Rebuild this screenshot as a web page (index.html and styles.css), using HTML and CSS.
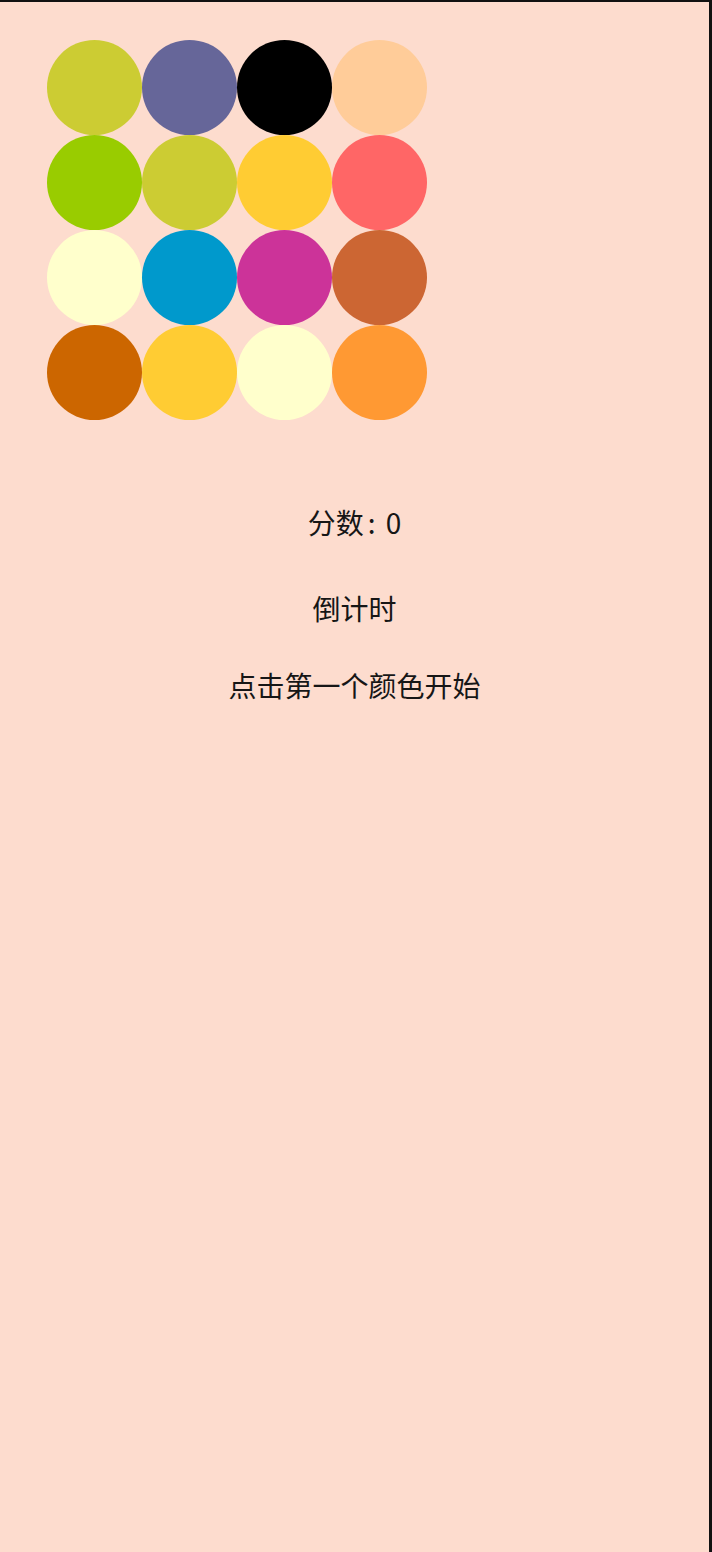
FILE: index.html
```html
<!DOCTYPE html>
<html lang="zh-CN">
<head>
<meta charset="utf-8">
<title>颜色游戏</title>
<link rel="stylesheet" href="styles.css">
</head>
<body>
<div class="page">
  <div class="board">
    <div class="dot c-cc3"></div>
    <div class="dot c-669"></div>
    <div class="dot c-000"></div>
    <div class="dot c-fc9"></div>
    <div class="dot c-9c0"></div>
    <div class="dot c-cc3"></div>
    <div class="dot c-fc3"></div>
    <div class="dot c-f66"></div>
    <div class="dot c-ffc"></div>
    <div class="dot c-09c"></div>
    <div class="dot c-c39"></div>
    <div class="dot c-c63"></div>
    <div class="dot c-c60"></div>
    <div class="dot c-fc3"></div>
    <div class="dot c-ffc"></div>
    <div class="dot c-f93"></div>
  </div>
  <p class="line score">分数<span class="sep">: </span>0</p>
  <p class="line timer">倒计时</p>
  <p class="line prompt">点击第一个颜色开始</p>
</div>
</body>
</html>
```
FILE: styles.css
```css
html, body {
  margin: 0;
  padding: 0;
  background: #fddcce;
}
.page {
  box-sizing: border-box;
  min-height: 1552px;
  width: 712px;
  background: #fddcce;
  border-top: 2px solid #111;
  border-right: 3px solid #111;
  font-family: "Noto Sans CJK SC", "Noto Sans", sans-serif;
  color: #161616;
  padding-top: 38px;
}
.board {
  display: grid;
  grid-template-columns: repeat(4, 95px);
  grid-auto-rows: 95px;
  margin-left: 47px;
  width: 380px;
}
.dot {
  width: 95px;
  height: 95px;
  border-radius: 50%;
}
.c-cc3 { background: #cccc33; }
.c-669 { background: #666699; }
.c-000 { background: #000000; }
.c-fc9 { background: #ffcc99; }
.c-9c0 { background: #99cc00; }
.c-fc3 { background: #ffcc33; }
.c-f66 { background: #ff6666; }
.c-ffc { background: #ffffcc; }
.c-09c { background: #0099cc; }
.c-c39 { background: #cc3399; }
.c-c63 { background: #cc6633; }
.c-c60 { background: #cc6600; }
.c-f93 { background: #ff9933; }
.line {
  margin: 0;
  text-align: center;
  font-size: 28px;
  line-height: 36px;
  height: 36px;
}
.sep {
  margin: 0 4px;
}
.score { margin-top: 84px; }
.timer { margin-top: 50px; }
.prompt { margin-top: 41px; }
```
